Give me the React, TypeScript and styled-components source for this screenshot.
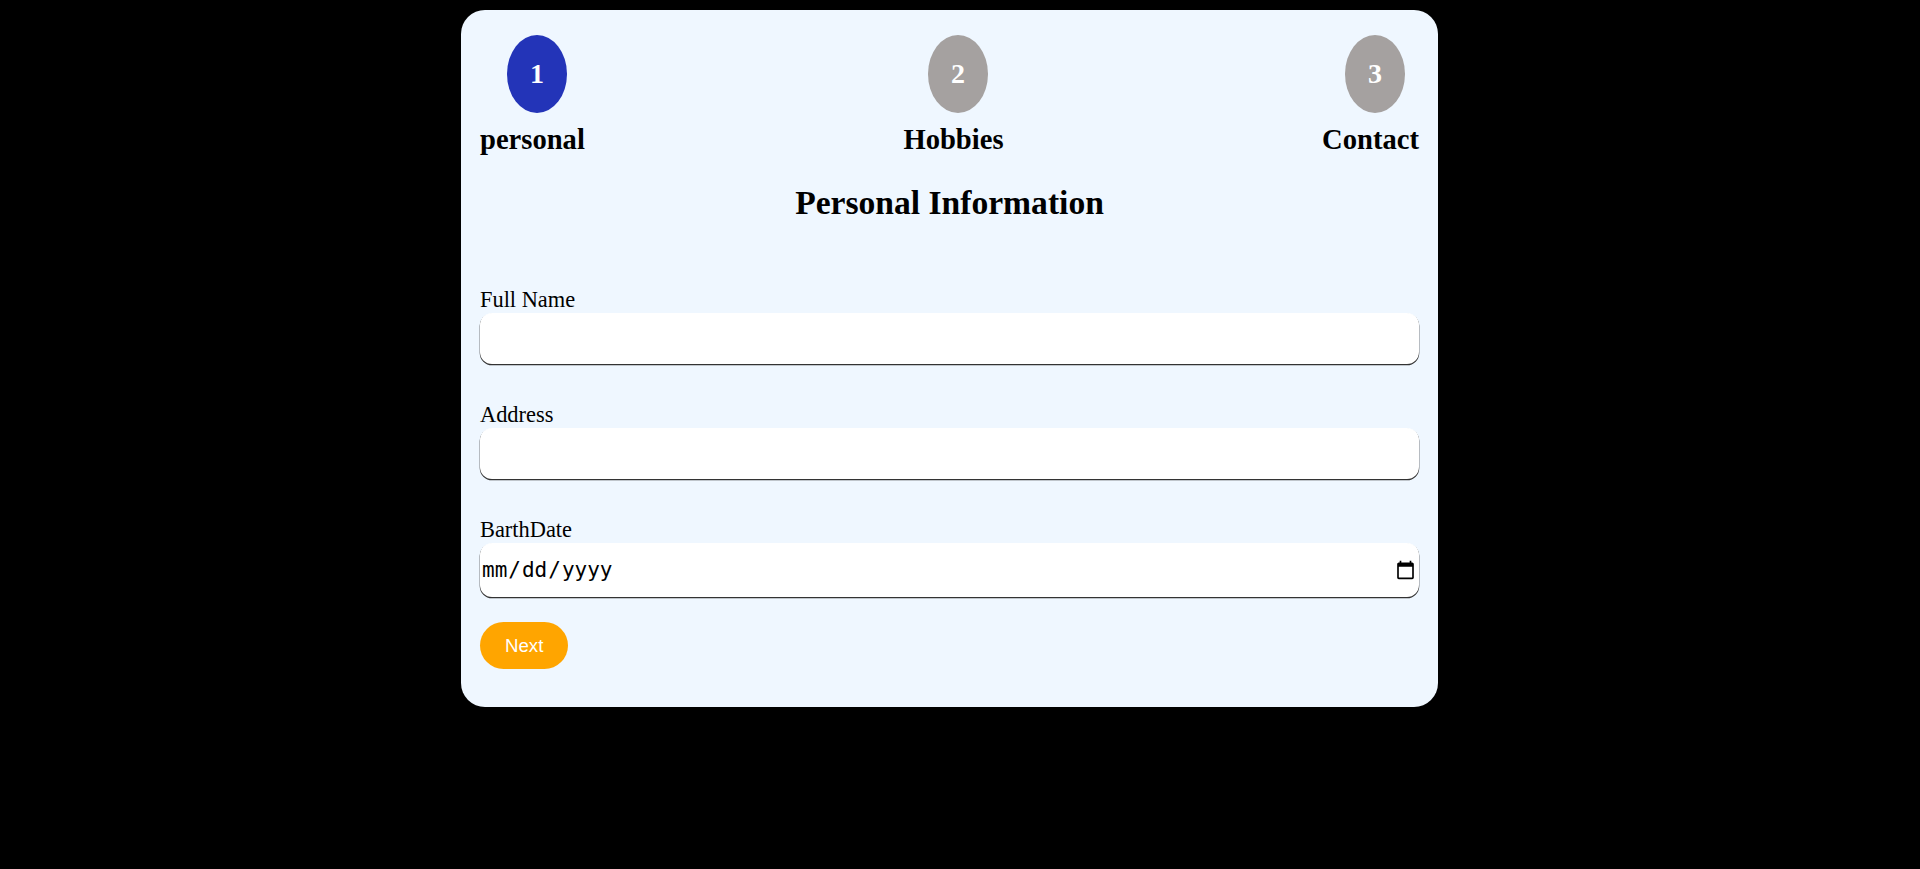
import React from "react";
import styled, { createGlobalStyle } from "styled-components";

const Global = createGlobalStyle`
  html, body {
    background: #000;
  }
  body {
    margin: 8px;
    font-family: "Liberation Serif", "Times New Roman", serif;
  }
`;

const Page = styled.div`
  min-height: 100vh;
  padding: 2px 21px 8px 0;
  box-sizing: border-box;
`;

const Card = styled.div`
  width: 977px;
  margin: 0 auto;
  box-sizing: border-box;
  background: #eff7ff;
  border-radius: 24px;
  padding: 25px 19px 38px;
`;

const Steps = styled.div`
  display: flex;
  justify-content: space-between;
  align-items: flex-start;
`;

const Step = styled.div`
  display: flex;
  flex-direction: column;
  align-items: center;
  gap: 10px;
`;

const Circle = styled.div<{ $active?: boolean }>`
  width: 60px;
  height: 78px;
  margin-left: 9px;
  border-radius: 50%;
  background: ${(p) => (p.$active ? "#2334b8" : "#a5a1a0")};
  color: #fff;
  display: flex;
  align-items: center;
  justify-content: center;
  font-weight: bold;
  font-size: 28px;
`;

const StepLabel = styled.div`
  font-weight: bold;
  font-size: 28.6px;
  line-height: 33px;
  color: #000;
`;

const Title = styled.h2`
  margin: 27px 0 65px;
  text-align: center;
  font-size: 33.6px;
  line-height: 39px;
  font-weight: bold;
  color: #000;
`;

const Form = styled.form`
  display: flex;
  flex-direction: column;
`;

const Field = styled.div`
  display: flex;
  flex-direction: column;
  margin-bottom: 38px;
  &:last-of-type {
    margin-bottom: 25px;
  }
`;

const Label = styled.label`
  font-size: 22.4px;
  line-height: 26px;
  color: #000;
`;

const TextInput = styled.input<{ $tall?: boolean }>`
  box-sizing: border-box;
  width: 100%;
  height: ${(p) => (p.$tall ? "54px" : "51px")};
  border: none;
  border-radius: 12px;
  background: #fff;
  box-shadow: 0 1px 0.5px 0.3px #333;
  padding: 1px;
  font-family: "DejaVu Sans Mono", "Liberation Mono", monospace;
  font-size: 21px;
  color: #000;
  outline: none;
`;

const NextButton = styled.button`
  align-self: flex-start;
  height: 47px;
  padding: 0 25px;
  border: none;
  border-radius: 24px;
  background: #ffa500;
  color: #fff;
  font-family: "Liberation Sans", Arial, sans-serif;
  font-size: 18.67px;
  cursor: pointer;
`;

const steps = [
  { n: 1, label: "personal", active: true },
  { n: 2, label: "Hobbies", active: false },
  { n: 3, label: "Contact", active: false },
];

export default function App() {
  return (
    <>
      <Global />
      <Page>
        <Card>
          <Steps>
            {steps.map((s) => (
              <Step key={s.n}>
                <Circle $active={s.active}>{s.n}</Circle>
                <StepLabel>{s.label}</StepLabel>
              </Step>
            ))}
          </Steps>
          <Title>Personal Information</Title>
          <Form onSubmit={(e) => e.preventDefault()}>
            <Field>
              <Label htmlFor="fullname">Full Name</Label>
              <TextInput id="fullname" type="text" />
            </Field>
            <Field>
              <Label htmlFor="address">Address</Label>
              <TextInput id="address" type="text" />
            </Field>
            <Field>
              <Label htmlFor="birth">BarthDate</Label>
              <TextInput id="birth" type="date" $tall />
            </Field>
            <NextButton type="submit">Next</NextButton>
          </Form>
        </Card>
      </Page>
    </>
  );
}
